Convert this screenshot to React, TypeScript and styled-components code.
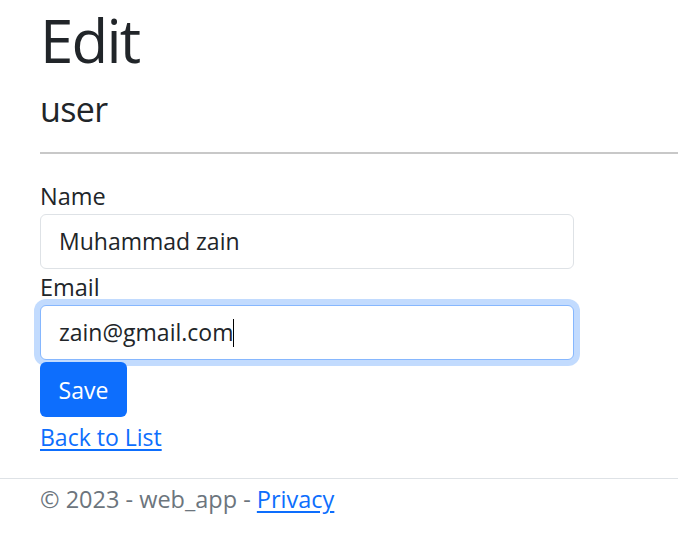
import React from "react";
import styled, { createGlobalStyle } from "styled-components";

const Global = createGlobalStyle`
  html, body { margin: 0; padding: 0; background: #fff; }
  body {
    font-family: "Open Sans", "Noto Sans", sans-serif;
    color: #212529;
    font-size: 23px;
    line-height: 1.5;
  }
`;

const Main = styled.main`
  padding: 0 0 0 40px;
`;

const Title = styled.h1`
  margin: 0;
  padding-top: 4px;
  font-size: 60px;
  font-weight: 400;
  line-height: 72px;
  letter-spacing: -1.8px;
`;

const Subtitle = styled.h4`
  margin: 11px 0 0;
  font-size: 34px;
  font-weight: 400;
  line-height: 44px;
  letter-spacing: -0.6px;
`;

const Rule = styled.hr`
  margin: 21px 0 24px;
  border: 0;
  border-top: 2px solid #c8c8c8;
`;

const Form = styled.form`
  width: 534px;
  display: flex;
  flex-direction: column;
`;

const Label = styled.label`
  display: block;
  line-height: 36px;
  font-size: 23.5px;
`;

const Field = styled.div<{ $focused?: boolean }>`
  box-sizing: border-box;
  height: 55px;
  padding: 8px 18px;
  line-height: 36px;
  border: 1.5px solid ${(p) => (p.$focused ? "#86b7fe" : "#dee2e6")};
  border-radius: 6px;
  background: #fff;
  color: #212529;
  white-space: nowrap;
  box-shadow: ${(p) => (p.$focused ? "0 0 0 6px rgba(13,110,253,0.25)" : "none")};
`;

const Caret = styled.span`
  display: inline-block;
  width: 1px;
  height: 28px;
  background: #000;
  vertical-align: -6px;
`;

const SaveButton = styled.button`
  align-self: flex-start;
  margin-top: 2px;
  height: 55px;
  width: 87px;
  padding: 0;
  border: 0;
  border-radius: 6px;
  background: #0d6efd;
  color: #fff;
  font-family: inherit;
  font-size: 23px;
  line-height: 36px;
`;

const LinkRow = styled.div`
  margin-top: 2px;
  line-height: 36px;
`;

const Link = styled.a`
  color: #0d6efd;
  text-decoration: underline;
  text-underline-offset: 3px;
`;

const Footer = styled.footer`
  margin-top: 23px;
  border-top: 1px solid #dee2e6;
  padding-left: 40px;
  line-height: 40px;
  font-size: 23.5px;
  color: #6c757d;
`;

export default function App() {
  return (
    <>
      <Global />
      <Main>
        <Title>Edit</Title>
        <Subtitle>user</Subtitle>
        <Rule />
        <Form onSubmit={(e) => e.preventDefault()}>
          <Label>Name</Label>
          <Field>Muhammad zain</Field>
          <Label>Email</Label>
          <Field $focused>
            zain@gmail.com<Caret />
          </Field>
          <SaveButton type="submit">Save</SaveButton>
        </Form>
        <LinkRow>
          <Link href="#">Back to List</Link>
        </LinkRow>
      </Main>
      <Footer>
        © 2023 - web_app - <Link href="#">Privacy</Link>
      </Footer>
    </>
  );
}
